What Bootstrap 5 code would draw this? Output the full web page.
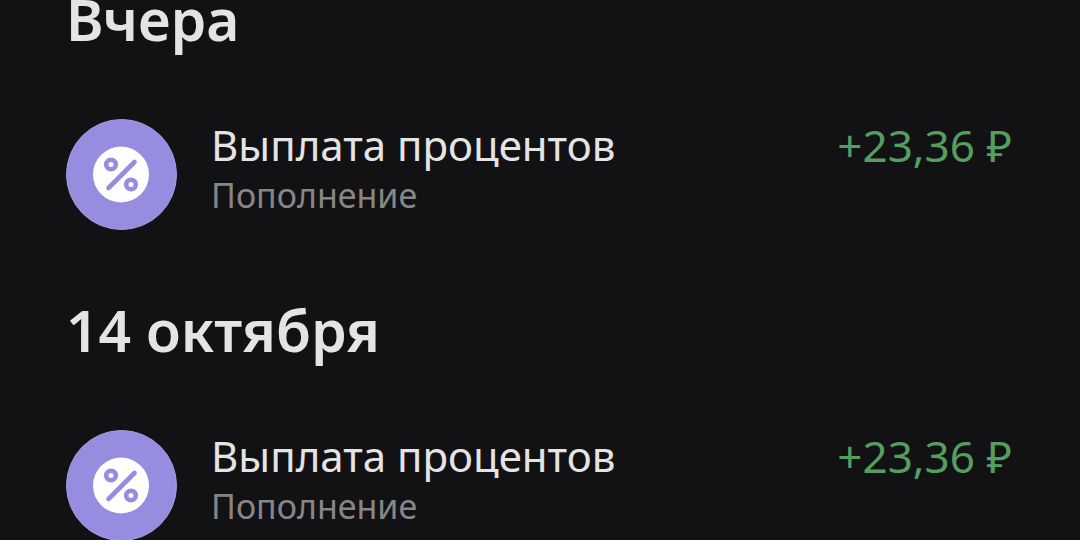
<!DOCTYPE html>
<html lang="ru" data-bs-theme="dark">
<head>
<meta charset="utf-8">
<meta name="viewport" content="width=device-width, initial-scale=1">
<title>История операций</title>
<link href="https://cdn.jsdelivr.net/npm/bootstrap@5.3.0/dist/css/bootstrap.min.css" rel="stylesheet">
<style>
body{background:#121214;color:#e4e4e4;font-family:"Noto Sans",sans-serif;overflow:hidden}
.history{padding:0 68px 0 66px}
.day-title{font-size:57px;line-height:80px;font-weight:600;margin:0;color:#e4e4e4}
.day + .day{margin-top:60px}
.day:first-child{margin-top:-21px}
.operation{gap:34px;margin-top:60px}
.op-icon{width:111px;height:111px;flex:none}
.op-name{font-size:42px;line-height:52px}
.op-kind{font-size:34px;line-height:48px;color:#868687}
.op-sum{font-size:44px;line-height:52px;color:#549f60}
</style>
</head>
<body>
<svg class="d-none" aria-hidden="true">
<symbol id="percent" viewBox="0 0 111 111">
<circle cx="55.5" cy="55.5" r="55" fill="#978de0" stroke="#a39be0"/>
<circle cx="55" cy="55.5" r="28" fill="#fff"/>
<g fill="none" stroke="#978de0" stroke-width="4.600" stroke-linecap="round"><path d="M42.500 69 68.500 43"/><circle cx="45" cy="45.500" r="4.800"/><circle cx="65" cy="65.500" r="4.800"/></g>
</symbol>
</svg>
<main class="history">
<section class="day">
<h2 class="day-title">Вчера</h2>
<div class="operation d-flex align-items-start">
<svg class="op-icon" aria-hidden="true"><use href="#percent"/></svg>
<div class="flex-grow-1"><div class="op-name">Выплата процентов</div><div class="op-kind">Пополнение</div></div>
<div class="op-sum text-nowrap">+23,36 ₽</div>
</div>
</section>
<section class="day">
<h2 class="day-title">14 октября</h2>
<div class="operation d-flex align-items-start">
<svg class="op-icon" aria-hidden="true"><use href="#percent"/></svg>
<div class="flex-grow-1"><div class="op-name">Выплата процентов</div><div class="op-kind">Пополнение</div></div>
<div class="op-sum text-nowrap">+23,36 ₽</div>
</div>
</section>
</main>
<script src="https://cdn.jsdelivr.net/npm/bootstrap@5.3.0/dist/js/bootstrap.bundle.min.js"></script>
</body>
</html>
